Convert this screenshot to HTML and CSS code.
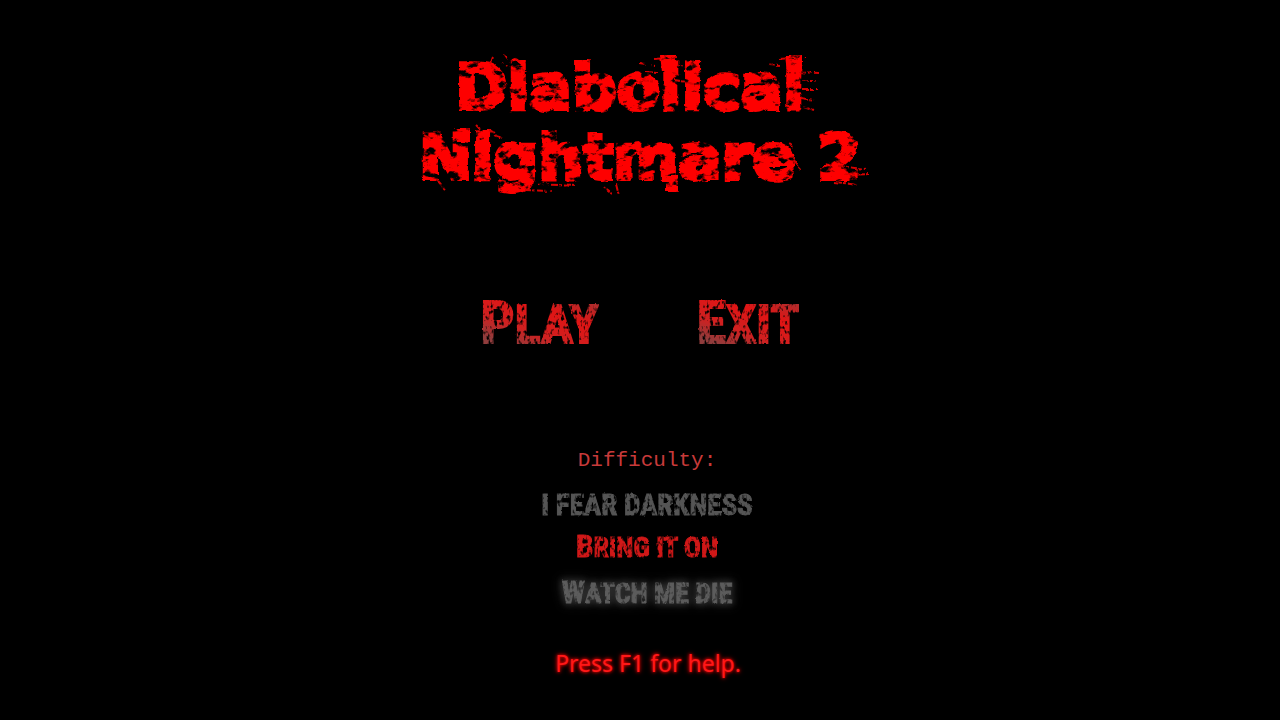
FILE: index.html
```html
<!DOCTYPE html>
<html lang="en">
<head>
<meta charset="utf-8">
<title>Diabolical Nightmare 2</title>
<link rel="stylesheet" href="styles.css">
</head>
<body>
<svg class="filters" width="0" height="0" aria-hidden="true">
  <filter id="torn" x="-5%" y="-15%" width="110%" height="130%" color-interpolation-filters="sRGB">
    <feTurbulence type="fractalNoise" baseFrequency="0.08 0.12" numOctaves="4" seed="8" result="n"/>
    <feDisplacementMap in="SourceGraphic" in2="n" scale="4" xChannelSelector="R" yChannelSelector="G" result="d"/>
    <feColorMatrix in="n" type="matrix" values="0 0 0 0 0  0 0 0 0 0  0 0 0 0 0  0 0 -7 0 4.9" result="m"/>
    <feComposite in="d" in2="m" operator="in"/>
  </filter>
  <filter id="worn" x="-5%" y="-10%" width="110%" height="120%" color-interpolation-filters="sRGB">
    <feTurbulence type="fractalNoise" baseFrequency="0.3 0.2" numOctaves="2" seed="5" result="n"/>
    <feDisplacementMap in="SourceGraphic" in2="n" scale="2" xChannelSelector="R" yChannelSelector="G" result="d"/>
    <feColorMatrix in="n" type="matrix" values="0 0 0 0 0  0 0 0 0 0  0 0 0 0 0  0 0 -4 0 3.1" result="m"/>
    <feComposite in="d" in2="m" operator="in"/>
  </filter>
</svg>
<main class="screen">
  <h1 class="title">
    <span class="line line-first">Diabolical</span>
    <span class="line">Nightmare 2</span>
    <svg class="splatter" viewBox="0 0 460 150" aria-hidden="true">
      <path d="M79 12q-4 8 2 17M91 9l3 4M100 12l6 5M87 19l7 3M107 22l4 5M97 25l10 2M226 19l14 2M232 27l12 1M228 34l13 2M240 14l24-2M259 20l14 2M258 28l17 1M260 35l20 3M355 20l12 1M352 33l12 2M364 14l27-2M386 27l18 1M388 36l15 0M388 44l14 0M387 53l13 2M390 62l10 3M50 84l5 2M62 80l5 5M74 85l6 3M80 90l8 3M10 90l8 5M24 136l7 8M110 145l28 1M124 139l37 2M190 142l8 6M202 139l3 12M374 95l5 8M380 116l7 10M424 121l28 3M430 130l26-1M420 137l24 3"/>
      <path class="slab" d="M246 10h16v17h-14zM371 10h17v17h-15zM41 83h15v14h-13zM252 130h12v17h-12z"/>
    </svg>
  </h1>
  <nav class="menu">
    <button class="action play" type="button">P<small>LAY</small></button>
    <button class="action exit" type="button">E<small>XIT</small></button>
  </nav>
  <section class="difficulty" aria-labelledby="difficulty-label">
    <h2 class="label" id="difficulty-label">Difficulty:</h2>
    <button class="level" type="button" aria-pressed="false">I FEAR DARKNESS</button>
    <button class="level selected" type="button" aria-pressed="true">B<small>RING IT ON</small></button>
    <button class="level glowing" type="button" aria-pressed="false"><span class="worn">W<small>ATCH ME DIE</small></span></button>
  </section>
  <p class="help">Press F1 for help.</p>
</main>
</body>
</html>
```
FILE: styles.css
```css
* { box-sizing: border-box; }
body { margin: 0; background: #000; }
.filters { position: absolute; }
.screen {
  min-height: 100vh;
  padding-top: 53px;
  display: flex;
  flex-direction: column;
  align-items: center;
}
.title {
  position: relative;
  margin: 0;
  width: 460px;
  font: bold 63px/70px "DejaVu Sans", sans-serif;
  color: #fe0000;
  text-align: center;
}
.line {
  display: block;
  white-space: nowrap;
  -webkit-text-stroke: 4px #fe0000;
  filter: url(#torn);
}
.line-first { padding-right: 20px; }
.splatter {
  position: absolute;
  left: 4px;
  top: -8px;
  width: 100%;
  fill: none;
  stroke: #d80000;
  stroke-width: 2;
  stroke-dasharray: 7 1 3 2;
  filter: url(#torn);
}
.slab {
  fill: #fe0000;
  stroke: none;
}
button {
  padding: 0;
  border: 0;
  background: none;
  cursor: pointer;
}
small { font-size: 90%; }
.menu {
  display: flex;
  gap: 98px;
  margin-top: 98px;
}
.action {
  font: bold 60px/64px "Roboto Condensed", Roboto, sans-serif;
  color: transparent;
  background: linear-gradient(20deg, #903c3c 20%, #d02020 40%, #e01414 65%, #a83030 90%);
  -webkit-background-clip: text;
  background-clip: text;
  -webkit-text-stroke: 2px transparent;
  filter: url(#worn);
}
.difficulty {
  display: flex;
  flex-direction: column;
  align-items: center;
  margin: 88px 0 0 14px;
}
.label {
  margin: 0 0 8px;
  font: 400 21px/32px "Courier New", "Liberation Mono", monospace;
  color: #c83a3a;
}
.level {
  font: bold 29px/41px "Roboto Condensed", Roboto, sans-serif;
  color: #555;
  -webkit-text-stroke: 1px;
  filter: url(#worn);
}
.selected {
  font-size: 31px;
  color: #d01818;
}
.glowing {
  margin-top: 4px;
  font-size: 31px;
  color: #5c5c5c;
  filter: drop-shadow(0 0 3px #333) drop-shadow(0 0 5px #333);
}
.worn { filter: url(#worn); display: inline-block; }
.help {
  margin: 33px 0 0 16px;
  font: 23px/32px "Noto Sans", sans-serif;
  color: #ff1818;
  text-shadow: 0 0 3px #f00, 0 0 5px #d00;
}
```
